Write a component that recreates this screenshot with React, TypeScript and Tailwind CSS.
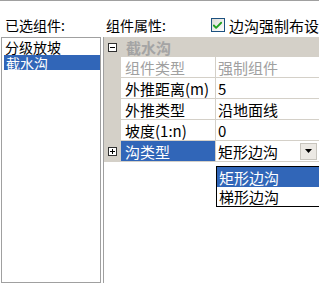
import { Check } from 'lucide-react';

const gridLine = 'border-[#d4d0c8]';

function BoxSign({ plus }: { plus?: boolean }) {
  return (
    <svg width="9" height="9" viewBox="0 0 9 9" className="block">
      <rect x="0.5" y="0.5" width="8" height="8" fill="white" stroke="#303030" />
      <line x1="2" y1="4.5" x2="7" y2="4.5" stroke="#000" />
      {plus && <line x1="4.5" y1="2" x2="4.5" y2="7" stroke="#000" />}
    </svg>
  );
}

function PropRow({
  name,
  value,
  muted,
  selected,
  children,
}: {
  name: string;
  value?: string;
  muted?: boolean;
  selected?: boolean;
  children?: React.ReactNode;
}) {
  return (
    <div className="flex h-[21px]">
      <div className="w-[17px] bg-[#d4d0c8] flex items-center justify-center pr-[1px]">
        {selected && <BoxSign plus />}
      </div>
      <div
        className={`w-[95px] border-b border-r ${gridLine} flex items-center pl-[4px] whitespace-nowrap ${
          selected ? 'bg-[#3166b8] text-white' : muted ? 'text-[#a0a0a0]' : ''
        }`}
      >
        {name}
      </div>
      <div
        className={`flex-1 border-b ${gridLine} flex items-center pl-[2px] whitespace-nowrap ${
          muted ? 'text-[#a0a0a0]' : ''
        }`}
      >
        {children ?? value}
      </div>
    </div>
  );
}

export default function App() {
  return (
    <div className="w-[319px] h-[283px] overflow-hidden bg-white border-t border-[#a0a0a0] flex text-black font-['Noto_Sans_CJK_SC',sans-serif] text-[15px] leading-none">
      <div className="w-[101px] pl-[1px] flex flex-col shrink-0">
        <div className="h-[36px] pt-[12px] pl-[4px] flex items-center text-[14px]">已选组件:</div>
        <div className="flex-1 border border-[#a0a0a0] pt-[1px] pl-[1px] text-[14px]">
          <div className="h-[16px] flex items-center pl-[2px]">分级放坡</div>
          <div className="h-[15px] flex items-center pl-[2px] ml-[1px] bg-[#3166b8] text-white">截水沟</div>
        </div>
      </div>

      <div className="ml-[2px] flex-1 flex flex-col min-w-0">
        <div className="h-[36px] pt-[12px] flex items-center text-[14px] whitespace-nowrap">
          <span className="pl-[3px]">组件属性:</span>
          <span className="ml-[45px] flex items-center gap-[4px]">
            <span className="w-[14px] h-[14px] border border-[#1c5180] bg-gradient-to-br from-[#dcdcd6] to-white flex items-center justify-center">
              <Check className="w-[11px] h-[11px] text-[#21a121]" strokeWidth={4} />
            </span>
            <span className="text-[15px]">边沟强制布设</span>
          </span>
        </div>

        <div className="relative flex-1 border-l border-[#a0a0a0]">
          <div className="h-[20px] bg-[#d4d0c8] flex items-center">
            <div className="w-[17px] flex items-center justify-center pr-[1px]">
              <BoxSign />
            </div>
            <span className="pl-[5px] font-bold text-[#a4a4a4]">截水沟</span>
          </div>
          <PropRow name="组件类型" value="强制组件" muted />
          <PropRow name="外推距离(m)" value="5" />
          <PropRow name="外推类型" value="沿地面线" />
          <PropRow name="坡度(1:n)" value="0" />
          <PropRow name="沟类型" selected>
            <div className="flex-1 flex items-center justify-between">
              <span>矩形边沟</span>
              <span className="w-[17px] h-[17px] mr-[2px] bg-[#ece9e4] border border-[#c8c5be] flex items-center justify-center">
                <svg width="7" height="4" viewBox="0 0 7 4">
                  <path d="M0 0h7L3.5 4z" fill="#000" />
                </svg>
              </span>
            </div>
          </PropRow>

          <div className="absolute left-[112px] top-[129px] w-[110px] border border-[#000] bg-white">
            <div className="h-[20px] flex items-center pl-[2px] bg-[#3166b8] text-white">矩形边沟</div>
            <div className="h-[19px] flex items-center pl-[2px]">梯形边沟</div>
          </div>
        </div>
      </div>
    </div>
  );
}
